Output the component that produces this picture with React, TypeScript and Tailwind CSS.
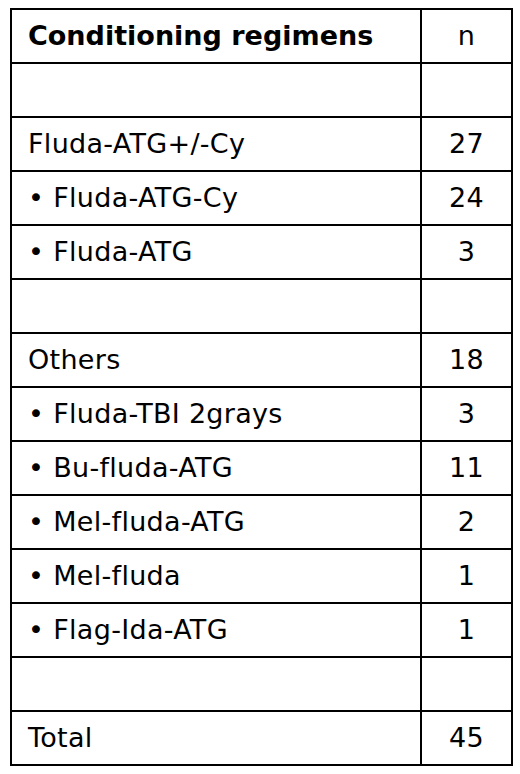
import React from 'react';

type Row = { label: string; n: string; bullet?: boolean; bold?: boolean };

const ROWS: Row[] = [
  { label: 'Conditioning regimens', n: 'n', bold: true },
  { label: '', n: '' },
  { label: 'Fluda-ATG+/-Cy', n: '27' },
  { label: 'Fluda-ATG-Cy', n: '24', bullet: true },
  { label: 'Fluda-ATG', n: '3', bullet: true },
  { label: '', n: '' },
  { label: 'Others', n: '18' },
  { label: 'Fluda-TBI 2grays', n: '3', bullet: true },
  { label: 'Bu-fluda-ATG', n: '11', bullet: true },
  { label: 'Mel-fluda-ATG', n: '2', bullet: true },
  { label: 'Mel-fluda', n: '1', bullet: true },
  { label: 'Flag-Ida-ATG', n: '1', bullet: true },
  { label: '', n: '' },
  { label: 'Total', n: '45' },
];

const App: React.FC = () => {
  return (
    <div className="min-h-screen bg-white pt-[8px] pl-[10px] text-black font-['DejaVu_Sans',sans-serif] text-[27px] tracking-[0.3px]">
      <div className="w-[503px] border-2 border-black">
        {ROWS.map((row, i) => (
          <div
            key={i}
            className={`flex h-[52px] box-content ${i < ROWS.length - 1 ? 'border-b-2 border-black' : ''}`}
          >
            <div className={`w-[408px] flex items-center pl-[16px] ${row.bold ? 'font-bold tracking-[0px]' : ''}`}>
              {row.bullet && <span className="mr-[9px]">•</span>}
              {row.label}
            </div>
            <div className="w-[2px] bg-black" />
            <div className="flex-1 flex items-center justify-center">{row.n}</div>
          </div>
        ))}
      </div>
    </div>
  );
};

export default App;
